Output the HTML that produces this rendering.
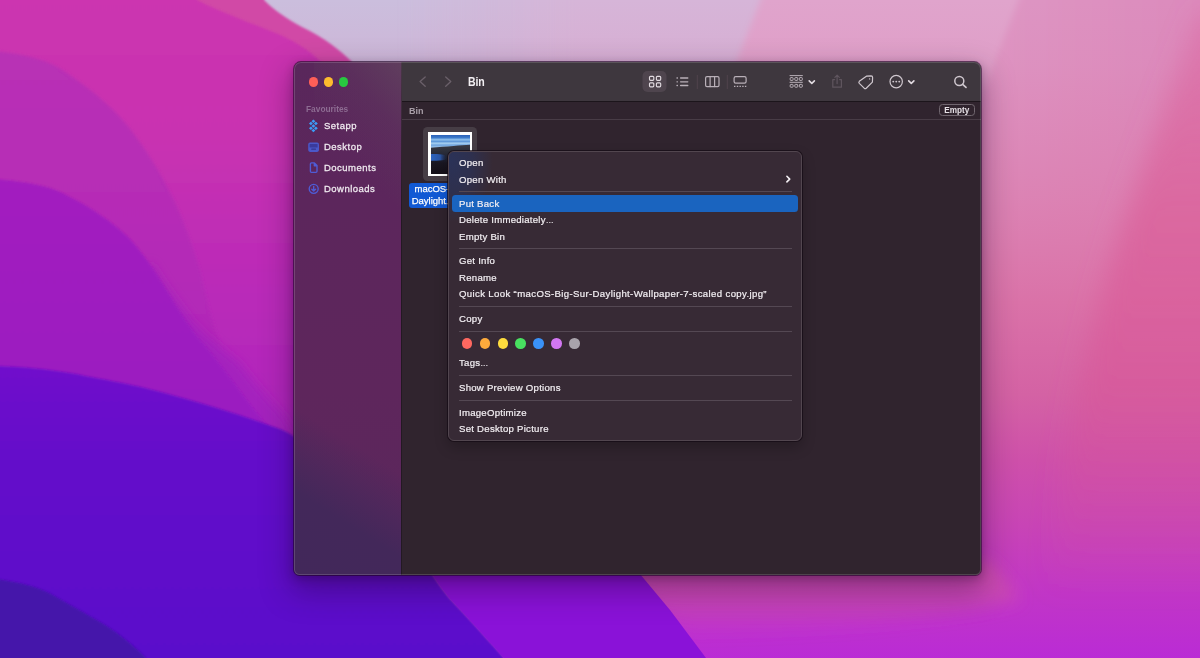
<!DOCTYPE html>
<html lang="en">
<head>
<meta charset="utf-8">
<title>Bin</title>
<style>
*{box-sizing:border-box;margin:0;padding:0}
html,body{width:1200px;height:658px;overflow:hidden;background:#c040b8}
body{position:relative;font-family:"Liberation Sans",sans-serif;color:#e6e0e6;-webkit-font-smoothing:antialiased}
#wall{position:absolute;left:0;top:0;width:1200px;height:658px;display:block}
#shadow{position:absolute;left:294px;top:61.5px;width:687px;height:513.3px;border-radius:7px 7px 5.5px 5.5px;box-shadow:0 13px 30px 4px rgba(28,2,45,.34),0 3px 9px 1px rgba(30,2,40,.26),0 0 0 .9px rgba(35,10,42,.62)}
#win{position:absolute;left:294px;top:61.5px;width:687px;height:513.3px;border-radius:7px 7px 5.5px 5.5px;overflow:hidden;background:#30242e}
#rim{position:absolute;left:0;top:0;right:0;bottom:0;border-radius:7px 7px 5.5px 5.5px;box-shadow:inset 0 0 0 1px rgba(255,255,255,.15);pointer-events:none}
#in{position:absolute;left:0;top:.5px;width:687px;height:512px;will-change:transform}
#side{position:absolute;left:0;top:-1px;width:107.5px;height:514px;background:linear-gradient(180deg,#59275b 0px,#5c265c 140px,#5e265c 330px,#5a275c 514px);border-right:1px solid #231923}
#sidelow{position:absolute;left:0;top:300px;width:106.5px;height:213px;background:linear-gradient(32deg,#42285a 0%,#43285a 30%,rgba(72,40,91,.72) 43%,rgba(90,39,92,0) 60%)}
#sideglow{position:absolute;left:20px;top:-1px;width:87.5px;height:160px;background:linear-gradient(230deg,rgba(100,76,96,.62) 0%,rgba(96,64,94,.3) 28%,rgba(92,40,92,0) 58%)}
.tl{position:absolute;top:15.2px;width:9.4px;height:9.4px;border-radius:50%}
#fav{position:absolute;left:12px;top:42px;font-size:8.35px;font-weight:bold;color:#8d6c92;letter-spacing:0}
.si{position:absolute;left:30px;margin-top:-.9px;font-size:9.5px;font-weight:normal;color:#efe9ef;letter-spacing:.48px;line-height:12px;-webkit-text-stroke:.27px #efe9ef}
#tool{position:absolute;left:107.5px;top:-1px;width:580px;height:40.5px;background:#3e373e;border-bottom:1px solid #1c151b}
#title{position:absolute;left:66px;top:15.3px;font-size:12px;font-weight:bold;color:#f3eff3;line-height:13px;letter-spacing:-.2px;transform:scaleX(.88);transform-origin:0 50%}
#path{position:absolute;left:108px;top:40px;width:579px;height:18px;border-bottom:1px solid #483c46}
#path span{position:absolute;left:7px;top:3.9px;font-size:9px;font-weight:bold;color:#a99fa8;line-height:11px}
#empty{position:absolute;left:536.5px;top:2.3px;width:36.5px;height:12px;border:1px solid #70666f;border-radius:3.5px;font-size:8.2px;font-weight:bold;color:#e6e1e6;text-align:center;line-height:11px}
#thumbbg{position:absolute;left:129px;top:65px;width:54px;height:54px;border-radius:4.5px;background:#463d45}
#thumb{position:absolute;left:134px;top:70.3px;width:44px;height:44px;background:#fff;padding:2.5px}
#lab{position:absolute;left:115px;top:121px;width:60px;height:24.5px;border-radius:3px;background:#1159d4;font-size:9.5px;line-height:11.8px;color:#fff;text-align:left;-webkit-text-stroke:.25px #fff}
#lab span{display:block;position:absolute;white-space:nowrap}
#menu{will-change:transform;position:absolute;left:448px;top:151px;width:354px;height:290px;border-radius:6px;background:#372a35;box-shadow:0 0 0 1px rgba(20,10,20,.7),0 6px 14px rgba(0,0,0,.24);border:1px solid #52464f}
.mi{position:absolute;left:10px;margin-top:.15px;font-size:9.6px;color:#f3eff3;line-height:12px;white-space:nowrap;letter-spacing:.26px;-webkit-text-stroke:.2px #f3eff3}
.el{font-size:8px;letter-spacing:0}
.ql{letter-spacing:.36px}
.sep{position:absolute;left:10px;width:333px;height:1px;background:#544853}
#tint{position:absolute;left:0;top:0;width:70px;height:80px;border-radius:5px 0 0 0;background:radial-gradient(ellipse 42px 62px at 2px 8px,rgba(34,56,112,.58) 0%,rgba(34,56,112,.42) 50%,rgba(34,56,112,0) 100%)}
#hl{position:absolute;left:3px;top:43.3px;width:346px;height:16.4px;border-radius:3.5px;background:#1a64bf}
.dot{position:absolute;top:186.2px;width:10.6px;height:10.6px;border-radius:50%}
</style>
</head>
<body>
<svg id="wall" viewBox="0 0 1200 658" width="1200" height="658">
<defs>
<linearGradient id="gF1" gradientUnits="userSpaceOnUse" x1="400" y1="0" x2="575" y2="0"><stop offset="0" stop-color="#d6b5d8" stop-opacity="0"/><stop offset=".55" stop-color="#d6b5d8" stop-opacity=".5"/><stop offset="1" stop-color="#d6b5d8" stop-opacity="1"/></linearGradient>
<linearGradient id="gTR" gradientUnits="userSpaceOnUse" x1="1000" y1="0" x2="1200" y2="0"><stop offset="0" stop-color="#de96c3"/><stop offset="1" stop-color="#dc8abc"/></linearGradient>
<linearGradient id="gRight" x1="0" y1="0" x2="0" y2="1">
<stop offset="0" stop-color="#db78ab" stop-opacity="0"/><stop offset=".10" stop-color="#db78ab" stop-opacity=".12"/><stop offset=".30" stop-color="#db78ab" stop-opacity=".62"/><stop offset=".46" stop-color="#da72a8" stop-opacity="1"/><stop offset=".60" stop-color="#d462a4"/><stop offset=".70" stop-color="#ce50aa"/><stop offset=".80" stop-color="#c844b6"/><stop offset=".90" stop-color="#c136c6"/><stop offset="1" stop-color="#ba2bd5"/>
</linearGradient>
<linearGradient id="gStreak" gradientUnits="userSpaceOnUse" x1="0" y1="565" x2="0" y2="640"><stop offset="0" stop-color="#d8609c" stop-opacity=".6"/><stop offset=".5" stop-color="#d258a4" stop-opacity=".42"/><stop offset="1" stop-color="#c848b4" stop-opacity="0"/></linearGradient>
<linearGradient id="gRose" x1="0" y1="0" x2="0" y2="1">
<stop offset="0" stop-color="#db5e98" stop-opacity=".35"/><stop offset=".3" stop-color="#db5e98" stop-opacity=".7"/><stop offset=".55" stop-color="#d85698" stop-opacity=".6"/><stop offset=".85" stop-color="#d04ca4" stop-opacity="0"/>
</linearGradient>
<linearGradient id="gMag" gradientUnits="userSpaceOnUse" x1="0" y1="0" x2="0" y2="460">
<stop offset="0" stop-color="#cc35b0"/><stop offset=".3" stop-color="#c932b1"/><stop offset=".6" stop-color="#bb2bb8"/><stop offset="1" stop-color="#ad25be"/>
</linearGradient>
<linearGradient id="gMag2" gradientUnits="userSpaceOnUse" x1="0" y1="50" x2="0" y2="350">
<stop offset="0" stop-color="#b830b5"/><stop offset=".5" stop-color="#b62cb6"/><stop offset="1" stop-color="#b127b8"/>
</linearGradient>
<linearGradient id="gPur" gradientUnits="userSpaceOnUse" x1="0" y1="180" x2="0" y2="440">
<stop offset="0" stop-color="#a31fbf"/><stop offset="1" stop-color="#9a1cc1"/>
</linearGradient>
<linearGradient id="gBlue" gradientUnits="userSpaceOnUse" x1="0" y1="367" x2="0" y2="658">
<stop offset="0" stop-color="#7011cc"/><stop offset=".3" stop-color="#650fca"/><stop offset="1" stop-color="#5a0ecb"/>
</linearGradient>
<filter id="b1" filterUnits="userSpaceOnUse" x="-100" y="-100" width="1400" height="900"><feGaussianBlur stdDeviation="0.8"/></filter>
<filter id="b2" filterUnits="userSpaceOnUse" x="-100" y="-100" width="1400" height="900"><feGaussianBlur stdDeviation="1.6"/></filter>
<filter id="b3" filterUnits="userSpaceOnUse" x="-100" y="-100" width="1400" height="900"><feGaussianBlur stdDeviation="3"/></filter>
<filter id="b6" filterUnits="userSpaceOnUse" x="-100" y="-100" width="1400" height="900"><feGaussianBlur stdDeviation="5"/></filter>
<filter id="b14" filterUnits="userSpaceOnUse" x="-100" y="-100" width="1500" height="900"><feGaussianBlur stdDeviation="13"/></filter>
<filter id="b8" filterUnits="userSpaceOnUse" x="-100" y="-100" width="1500" height="900"><feGaussianBlur stdDeviation="8"/></filter>
</defs>
<rect width="1200" height="658" fill="#cbbedd"/>
<g filter="url(#b3)">
<path d="M400,-20 L1300,-20 L1300,700 L120,700 Z" fill="url(#gF1)"/>
<path d="M768,-20 L1300,-20 L1300,700 L490,700 Z" fill="#e0a4cc"/>
<path d="M1026,-20 L1300,-20 L1300,700 L750,700 Z" fill="url(#gTR)"/>
</g>
<rect x="0" width="1200" height="658" fill="url(#gRight)"/>
<!-- rose facet right -->
<path d="M1200,10 C1172,84 1146,158 1128,210 C1106,272 1086,342 1064,470 L1030,700 L1300,700 L1300,20 Z" fill="url(#gRose)" filter="url(#b14)"/>
<!-- rose streak under window -->
<path d="M600,560 L985,560 C1000,572 1010,584 1020,600 C960,616 860,628 690,634 Z" fill="url(#gStreak)" filter="url(#b8)"/>
<!-- pink band -->
<path d="M190,-40 L264,-40 L264,0 C276,12 292,22 308,30 C324,38 340,50 352,62 L352,200 L190,200 Z" fill="#d148a6" filter="url(#b1)"/>
<!-- main magenta -->
<path d="M-40,-40 L197,-40 L197,0 C214,9 250,23 268,30 C290,38 310,50 322,63 L322,500 L-40,500 Z" fill="url(#gMag)" filter="url(#b1)"/>
<!-- darker magenta wave -->
<path d="M-40,48 C30,52 52,62 67,73 C95,92 118,112 134,134 C152,158 164,180 174,200 C186,226 194,250 200,270 C206,296 212,324 222,348 L-40,400 Z" fill="url(#gMag2)" filter="url(#b2)"/>
<!-- purple wave -->
<path d="M150,262 C166,288 183,310 196,326 C206,336 219,346 240,364 C258,388 274,405 284,416 C292,430 300,444 300,444 L100,470 Z" fill="#a420be" filter="url(#b6)"/>
<path d="M-40,177 C28,180 50,186 68,196 C92,208 112,222 128,237 C150,260 162,284 176,306 C186,322 194,334 205,346 C222,366 240,392 256,412 C266,424 276,436 284,448 L-40,470 Z" fill="url(#gPur)" filter="url(#b1)"/>
<!-- blue violet -->
<path d="M-40,365 C34,366 62,371 91,377 C112,381 128,384 145,388 C170,394 194,401 217,408 C240,415 260,422 280,429 C300,437 330,462 360,500 C392,530 418,556 432,574 C440,586 447,596 455,604 C472,622 490,642 504,658 L504,700 L-40,700 Z" fill="url(#gBlue)" filter="url(#b1)"/>
<!-- dark blue corner -->
<path d="M-40,575 C22,580 42,588 58,598 C82,612 102,622 117,633 C128,641 138,650 146,658 L146,700 L-40,700 Z" fill="#4514aa" filter="url(#b1)"/>
<!-- violet wedge -->
<path d="M432,574 C440,586 447,596 455,604 C472,622 490,642 504,658 L706,658 C694,642 682,626 670,610 C660,598 650,586 640,574 L600,480 L440,480 Z" fill="#8a12d8"/>
</svg>

<div id="shadow"></div>
<div id="win"><div id="in">
  <div id="side"></div><div id="sidelow"></div><div id="sideglow"></div>
  <div class="tl" style="left:14.7px;background:#fe5f58"></div>
  <div class="tl" style="left:29.7px;background:#febc2e"></div>
  <div class="tl" style="left:44.6px;background:#28c840"></div>
  <div id="fav">Favourites</div>
  <div class="si" style="top:58.5px">Setapp</div>
  <div class="si" style="top:80.1px">Desktop</div>
  <div class="si" style="top:100.8px">Documents</div>
  <div class="si" style="top:121.4px">Downloads</div>

  <div id="tool">
    <div id="title">Bin</div>
  </div>
  <div id="path"><span>Bin</span><div id="empty">Empty</div></div>
  <div id="thumbbg"></div>
  <div id="thumb"><svg viewBox="0 0 38 38" width="39" height="39" style="display:block" preserveAspectRatio="none">
<defs><linearGradient id="sk" x1="0" y1="0" x2="0" y2="1"><stop offset="0" stop-color="#2a5fb6"/><stop offset=".07" stop-color="#3c7bcc"/><stop offset=".12" stop-color="#8fc0ec"/><stop offset=".17" stop-color="#5d97d8"/><stop offset=".21" stop-color="#a9d2f2"/><stop offset=".26" stop-color="#6fa4de"/><stop offset=".31" stop-color="#9cc2e8"/><stop offset=".36" stop-color="#7d9cc4"/></linearGradient>
<linearGradient id="mt" x1="0" y1="0" x2="0" y2="1"><stop offset="0" stop-color="#3a3b45"/><stop offset=".22" stop-color="#2d2f3a"/><stop offset=".45" stop-color="#1f2334"/><stop offset=".62" stop-color="#1a1722"/><stop offset="1" stop-color="#151018"/></linearGradient>
<linearGradient id="lk" x1="0" y1="0" x2="1" y2="0"><stop offset="0" stop-color="#2c63bd"/><stop offset=".6" stop-color="#2a55a4"/><stop offset="1" stop-color="#243a70" stop-opacity="0"/></linearGradient></defs>
<rect width="38" height="38" fill="url(#sk)"/>
<path d="M0,12.4 C8,11.6 14,11.2 22,10.6 C28,10.1 33,9.9 38,9.6 V38 H0 Z" fill="url(#mt)"/>
<path d="M0,18.6 C4,18.2 9,18.6 13,19.4 C15,20.6 15.5,22.4 14,24 C9,25 4,25.2 0,25 Z" fill="url(#lk)"/>
</svg></div>
  <div id="lab"><span style="left:5.5px;top:.3px">macOS-</span><span style="left:2.7px;top:12.4px">Daylight.</span></div>
</div><div id="rim"></div></div>

<div id="menu">
  <div id="tint"></div>
  <div id="hl"></div>
  <div class="mi" style="top:5px">Open</div>
  <div class="mi" style="top:21.5px">Open With</div>
  <div class="sep" style="top:38.5px"></div>
  <div class="mi" style="top:46px">Put Back</div>
  <div class="mi" style="top:61.9px">Delete Immediately<span class="el">…</span></div>
  <div class="mi" style="top:78.6px">Empty Bin</div>
  <div class="sep" style="top:96px"></div>
  <div class="mi" style="top:102.9px">Get Info</div>
  <div class="mi" style="top:120px">Rename</div>
  <div class="mi ql" style="top:135.9px">Quick Look “macOS-Big-Sur-Daylight-Wallpaper-7-scaled copy.jpg”</div>
  <div class="sep" style="top:154px"></div>
  <div class="mi" style="top:161px">Copy</div>
  <div class="sep" style="top:178.5px"></div>
  <div class="dot" style="left:12.8px;background:#fe6860"></div>
  <div class="dot" style="left:30.7px;background:#fdaa3c"></div>
  <div class="dot" style="left:48.6px;background:#fddc3e"></div>
  <div class="dot" style="left:66.4px;background:#48e060"></div>
  <div class="dot" style="left:84.3px;background:#3a92f8"></div>
  <div class="dot" style="left:102.2px;background:#d277f2"></div>
  <div class="dot" style="left:120px;background:#a8a3ab"></div>
  <div class="mi" style="top:205px">Tags<span class="el">…</span></div>
  <div class="sep" style="top:223px"></div>
  <div class="mi" style="top:229.8px">Show Preview Options</div>
  <div class="sep" style="top:247.5px"></div>
  <div class="mi" style="top:255px">ImageOptimize</div>
  <div class="mi" style="top:270.8px">Set Desktop Picture</div>
</div>

<svg id="icons" viewBox="0 0 1200 658" width="1200" height="658" style="position:absolute;left:0;top:0;pointer-events:none" fill="none" stroke-linecap="round" stroke-linejoin="round">
<!-- nav arrows -->
<path d="M425.2,76.9 L420.1,81.6 L425.2,86.3" stroke="#6b606a" stroke-width="1.3"/>
<path d="M445.7,76.9 L450.8,81.6 L445.7,86.3" stroke="#6b606a" stroke-width="1.3"/>
<!-- icon view selected -->
<rect x="642.5" y="71" width="24" height="21" rx="5" fill="#4f454e"/>
<g stroke="#e2dbe1" stroke-width="1.15">
<rect x="649.5" y="76.3" width="4.3" height="4" rx="1"/><rect x="656.4" y="76.3" width="4.3" height="4" rx="1"/>
<rect x="649.5" y="82.8" width="4.3" height="4" rx="1"/><rect x="656.4" y="82.8" width="4.3" height="4" rx="1"/>
</g>
<!-- list -->
<g stroke="#b9b0b8" stroke-width="1.3">
<path d="M677,78 h0.4 M680.6,78 h7.2 M677,81.8 h0.4 M680.6,81.8 h7.2 M677,85.5 h0.4 M680.6,85.5 h7.2"/>
</g>
<path d="M697.3,75 v14 M727.3,75 v14" stroke="#52454f" stroke-width="1" stroke-linecap="butt" opacity=".9"/>
<!-- columns -->
<g stroke="#b9b0b8" stroke-width="1.2">
<rect x="705.6" y="76.6" width="13.4" height="10" rx="1.4"/><path d="M710.1,76.6 v10 M714.6,76.6 v10"/>
</g>
<!-- gallery -->
<g stroke="#b9b0b8" stroke-width="1.2">
<rect x="734.1" y="76.6" width="12" height="6.6" rx="1.6"/>
</g>
<path d="M734,86.3 h1.4 M736.8,86.3 h1.4 M739.5,86.3 h1.4 M742.2,86.3 h1.4 M744.9,86.3 h1.4" stroke="#b9b0b8" stroke-width="1.3" stroke-linecap="butt"/>
<!-- group -->
<g stroke="#b9b0b8" stroke-width="1" stroke-linecap="butt">
<path d="M789.6,75.6 h13.2 M789.6,82.3 h13.2"/>
<rect x="790.2" y="77.6" width="2.9" height="2.8" rx=".6"/><rect x="794.8" y="77.6" width="2.9" height="2.8" rx=".6"/><rect x="799.4" y="77.6" width="2.9" height="2.8" rx=".6"/>
<rect x="790.2" y="84.4" width="2.9" height="2.8" rx=".6"/><rect x="794.8" y="84.4" width="2.9" height="2.8" rx=".6"/><rect x="799.4" y="84.4" width="2.9" height="2.8" rx=".6"/>
</g>
<path d="M809.2,80.9 L811.8,83.4 L814.4,80.9" stroke="#e2dbe1" stroke-width="1.6"/>
<!-- share (disabled) -->
<g stroke="#5f555e" stroke-width="1.2">
<path d="M834.6,79.6 H832.8 V87.2 H841.4 V79.6 H839.6"/><path d="M837.1,83.6 V75.2 M834.9,77.3 L837.1,75.1 L839.3,77.3"/>
</g>
<!-- tag -->
<g stroke="#cfc7ce" stroke-width="1.2">
<path d="M866.4,76.2 L871.1,75.9 Q872.6,75.9 872.6,77.4 L872.4,82.1 L866.2,88.2 Q865.2,89.1 864.2,88.2 L859.3,83.3 Q858.4,82.3 859.3,81.3 Z"/>
<circle cx="869.6" cy="78.9" r=".7" fill="#cfc7ce" stroke="none"/>
</g>
<!-- more -->
<circle cx="896.2" cy="81.6" r="6.2" stroke="#cfc7ce" stroke-width="1.2"/>
<path d="M893.2,81.6 h.1 M896.2,81.6 h.1 M899.2,81.6 h.1" stroke="#cfc7ce" stroke-width="1.8"/>
<path d="M908.7,80.9 L911.3,83.4 L913.9,80.9" stroke="#e2dbe1" stroke-width="1.6"/>
<!-- search -->
<circle cx="959.3" cy="81" r="4.5" stroke="#cfc7ce" stroke-width="1.5"/>
<path d="M962.7,84.4 L966,87.4" stroke="#cfc7ce" stroke-width="1.7"/>
<!-- sidebar icons -->
<g fill="#3c9df8" stroke="none"><path d="M313.40,119.45 l1.95,1.75 l-1.95,1.75 l-1.95,-1.75 z M310.90,121.80 l1.95,1.75 l-1.95,1.75 l-1.95,-1.75 z M315.90,121.80 l1.95,1.75 l-1.95,1.75 l-1.95,-1.75 z M313.40,124.15 l1.95,1.75 l-1.95,1.75 l-1.95,-1.75 z M310.90,126.50 l1.95,1.75 l-1.95,1.75 l-1.95,-1.75 z M315.90,126.50 l1.95,1.75 l-1.95,1.75 l-1.95,-1.75 z M313.40,128.85 l1.95,1.75 l-1.95,1.75 l-1.95,-1.75 z"/></g>
<rect x="308.2" y="142.6" width="10.8" height="9.3" rx="1.8" fill="#4b58c9"/>
<rect x="309.6" y="144" width="8" height="3.6" rx=".5" fill="#3a3a9c"/>
<rect x="311.2" y="148.6" width="4.8" height="1.2" rx=".4" fill="#35358f"/>
<path d="M311.4,162.9 H314.4 L317,165.5 V171.3 Q317,172.4 315.9,172.4 H311.4 Q310.4,172.4 310.4,171.3 V163.9 Q310.4,162.9 311.4,162.9 Z M314.3,163 V165.7 H316.9" stroke="#4f5cd6" stroke-width="1.35"/>
<circle cx="313.7" cy="188.8" r="4.5" stroke="#4f5cd6" stroke-width="1.35"/>
<path d="M313.7,186.3 V191 M311.8,189.3 L313.7,191.1 L315.6,189.3" stroke="#4f5cd6" stroke-width="1.35"/>
<!-- submenu chevron -->
<path d="M786.9,176.3 L789.7,179.1 L786.9,181.9" stroke="#f4f0f4" stroke-width="1.6"/>
</svg>
</body>
</html>
